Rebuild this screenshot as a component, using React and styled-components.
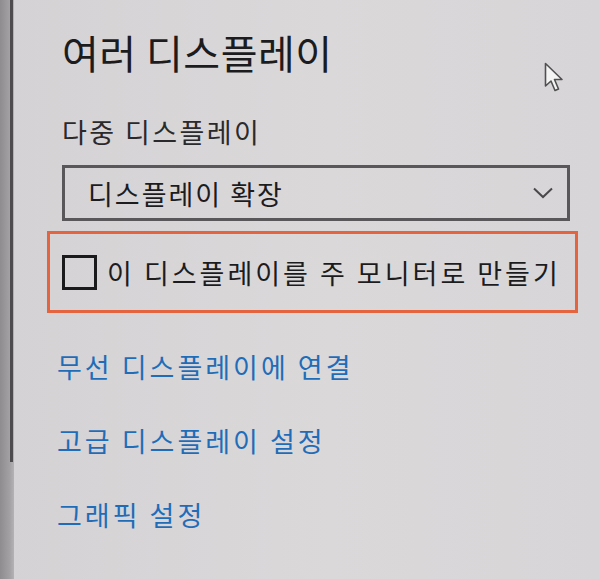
import React from "react";
import styled, { createGlobalStyle } from "styled-components";

const GlobalStyle = createGlobalStyle`
  html, body {
    margin: 0;
    padding: 0;
    background: #d8d6d8;
  }
  body {
    font-family: "Noto Sans CJK KR", "Noto Sans", sans-serif;
    -webkit-font-smoothing: antialiased;
  }
`;

const Screen = styled.div`
  position: relative;
  display: flex;
  width: 600px;
  height: 579px;
  overflow: hidden;
  background: linear-gradient(90deg, #d5d2d5 0%, #dbd8da 55%, #d8d5d8 100%);
`;

const Rail = styled.div`
  width: 14px;
  flex: none;
  display: flex;
  justify-content: flex-end;
  background: linear-gradient(90deg, #8e8c8e 0%, #a3a1a3 70%, #b4b2b4 100%);
`;

const Thumb = styled.div`
  width: 3px;
  height: 462px;
  margin-right: 1px;
  background: #4d4b4d;
`;

const Content = styled.div`
  flex: 1;
  display: flex;
  flex-direction: column;
  padding: 24px 0 0 48px;
`;

const Title = styled.h1`
  margin: 0;
  font-size: 40px;
  font-weight: 400;
  line-height: 56px;
  color: #1c1c1e;
  letter-spacing: 0.5px;
`;

const Label = styled.div`
  margin-top: 34px;
  font-size: 27px;
  line-height: 36px;
  color: #2a2a2c;
  letter-spacing: 2.4px;
`;

const Select = styled.div`
  margin-top: 15px;
  box-sizing: border-box;
  width: 508px;
  height: 56px;
  border: 3px solid #59575a;
  display: flex;
  align-items: center;
  justify-content: space-between;
  padding: 0 14px 0 23px;
  font-size: 27px;
  letter-spacing: 2px;
  color: #1c1c1e;
`;

const Highlight = styled.div`
  margin: 10px 0 0 -15px;
  width: 531px;
  height: 82px;
  box-sizing: border-box;
  border: 3px solid #e4643f;
  display: flex;
  align-items: center;
  padding-left: 12px;
  gap: 10px;
`;

const Box = styled.div`
  width: 35px;
  height: 35px;
  box-sizing: border-box;
  border: 3px solid #1a1a1c;
  flex: none;
`;

const CheckText = styled.span`
  font-size: 27px;
  color: #1c1c1e;
  letter-spacing: 3px;
`;

const Links = styled.div`
  display: flex;
  flex-direction: column;
  margin-top: 36px;
  margin-left: -5px;
  gap: 38px;
`;

const Link = styled.a`
  font-size: 27px;
  line-height: 36px;
  color: #1f6db8;
  text-decoration: none;
  letter-spacing: 3px;
`;

const Cursor = styled.svg`
  position: absolute;
  left: 544px;
  top: 62px;
`;

export default function App() {
  return (
    <>
      <GlobalStyle />
      <Screen>
        <Rail>
          <Thumb />
        </Rail>
        <Content>
          <Title>여러 디스플레이</Title>
          <Label>다중 디스플레이</Label>
          <Select>
            <span>디스플레이 확장</span>
            <svg width="20" height="12" viewBox="0 0 20 12">
              <path d="M1 1.5 L10 10 L19 1.5" fill="none" stroke="#4a484a" strokeWidth="2" />
            </svg>
          </Select>
          <Highlight>
            <Box />
            <CheckText>이 디스플레이를 주 모니터로 만들기</CheckText>
          </Highlight>
          <Links>
            <Link>무선 디스플레이에 연결</Link>
            <Link>고급 디스플레이 설정</Link>
            <Link>그래픽 설정</Link>
          </Links>
        </Content>
        <Cursor width="22" height="34" viewBox="0 0 22 34">
          <path
            d="M1.5 1.5 L1.5 24 L7 19 L11 28.5 L14.5 27 L10.5 17.5 L18 17.5 Z"
            fill="#f4f4f4"
            stroke="#505052"
            strokeWidth="1.6"
            strokeLinejoin="round"
          />
        </Cursor>
      </Screen>
    </>
  );
}
